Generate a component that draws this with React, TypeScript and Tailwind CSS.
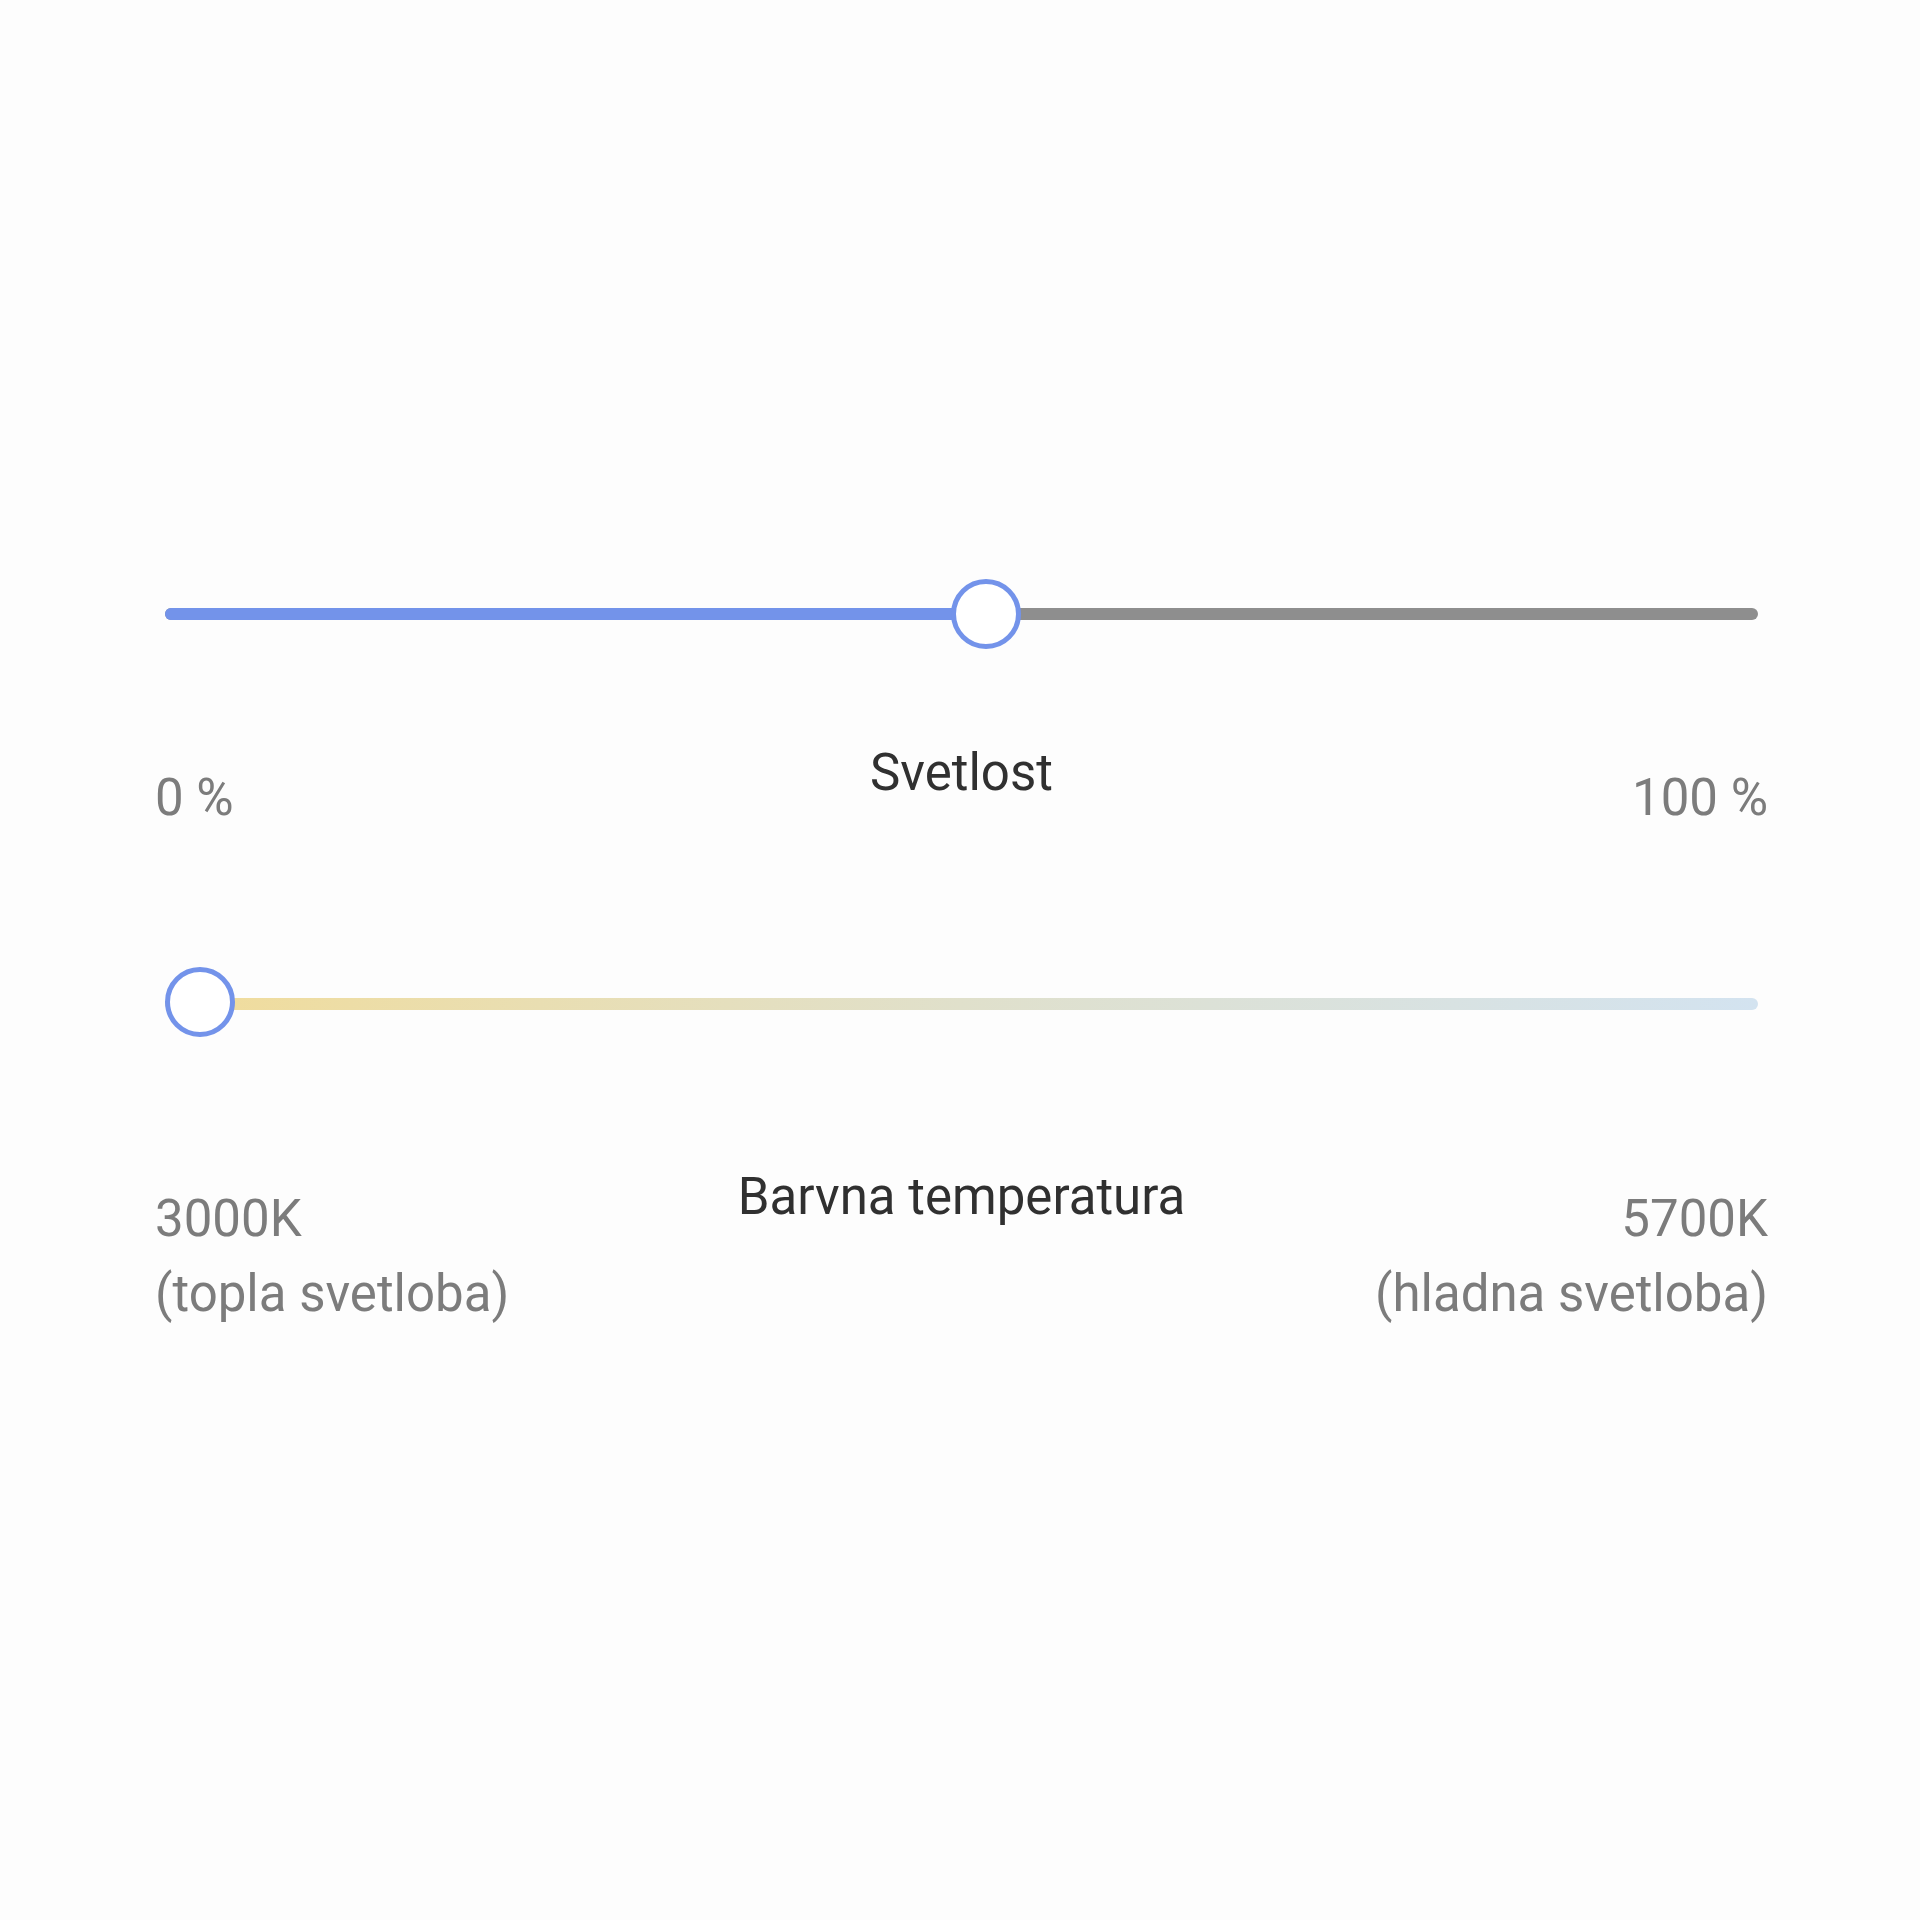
import React from "react";

const font = { fontFamily: "Roboto, 'Noto Sans', Arial, sans-serif" };

function Thumb() {
  return (
    <div className="h-[70px] w-[70px] rounded-full border-[5px] border-[#7393ea] bg-white box-border" />
  );
}

function BrightnessSlider({ value }: { value: number }) {
  // thumb travels inside the track: its left edge moves from 0 to (track - thumb)
  const left = `calc(${value} * (100% - 70px))`;
  const fill = `calc(${value} * (100% - 70px) + 35px)`;
  return (
    <div className="relative h-[72px] mx-[10px]">
      <div className="absolute left-0 right-0 top-[30px] h-[12px] rounded-full bg-[#8e8e8e]" />
      <div
        className="absolute left-0 top-[30px] h-[12px] rounded-full bg-[#7393ea]"
        style={{ width: fill }}
      />
      <div className="absolute top-[1px]" style={{ left }}>
        <Thumb />
      </div>
    </div>
  );
}

function TemperatureSlider({ value }: { value: number }) {
  const left = `calc(${value} * (100% - 70px))`;
  return (
    <div className="relative h-[70px] mx-[10px]">
      <div className="absolute left-0 right-0 top-[31px] h-[12px] rounded-full bg-gradient-to-r from-[#f1dc9a] via-[#e0e0cb] to-[#d3e3f0]" />
      <div className="absolute top-0" style={{ left }}>
        <Thumb />
      </div>
    </div>
  );
}

export default function App() {
  return (
    <div
      className="w-[1920px] h-[1920px] bg-[#fdfdfd] pl-[155px] pr-[152px] pt-[578px]"
      style={font}
    >
      <BrightnessSlider value={0.516} />

      <div className="mt-[97px] grid grid-cols-[1fr_auto_1fr] items-start">
        <div className="mt-[25px] text-[51px] leading-[51px] text-[#7c7c7c]">0 %</div>
        <div className="text-[51px] leading-[51px] text-[#303030]">Svetlost</div>
        <div className="mt-[25px] text-right text-[51px] leading-[51px] text-[#7c7c7c]">100 %</div>
      </div>

      <div className="mt-[144px]">
        <TemperatureSlider value={0} />
      </div>

      <div className="mt-[134px] grid grid-cols-[1fr_auto_1fr] items-start">
        <div className="mt-[10px] text-[51px] leading-[75px] text-[#7c7c7c]">
          <div>3000K</div>
          <div>(topla svetloba)</div>
        </div>
        <div className="text-[51px] leading-[51px] text-[#303030]">Barvna temperatura</div>
        <div className="mt-[10px] text-right text-[51px] leading-[75px] text-[#7c7c7c]">
          <div>5700K</div>
          <div>(hladna svetloba)</div>
        </div>
      </div>
    </div>
  );
}
